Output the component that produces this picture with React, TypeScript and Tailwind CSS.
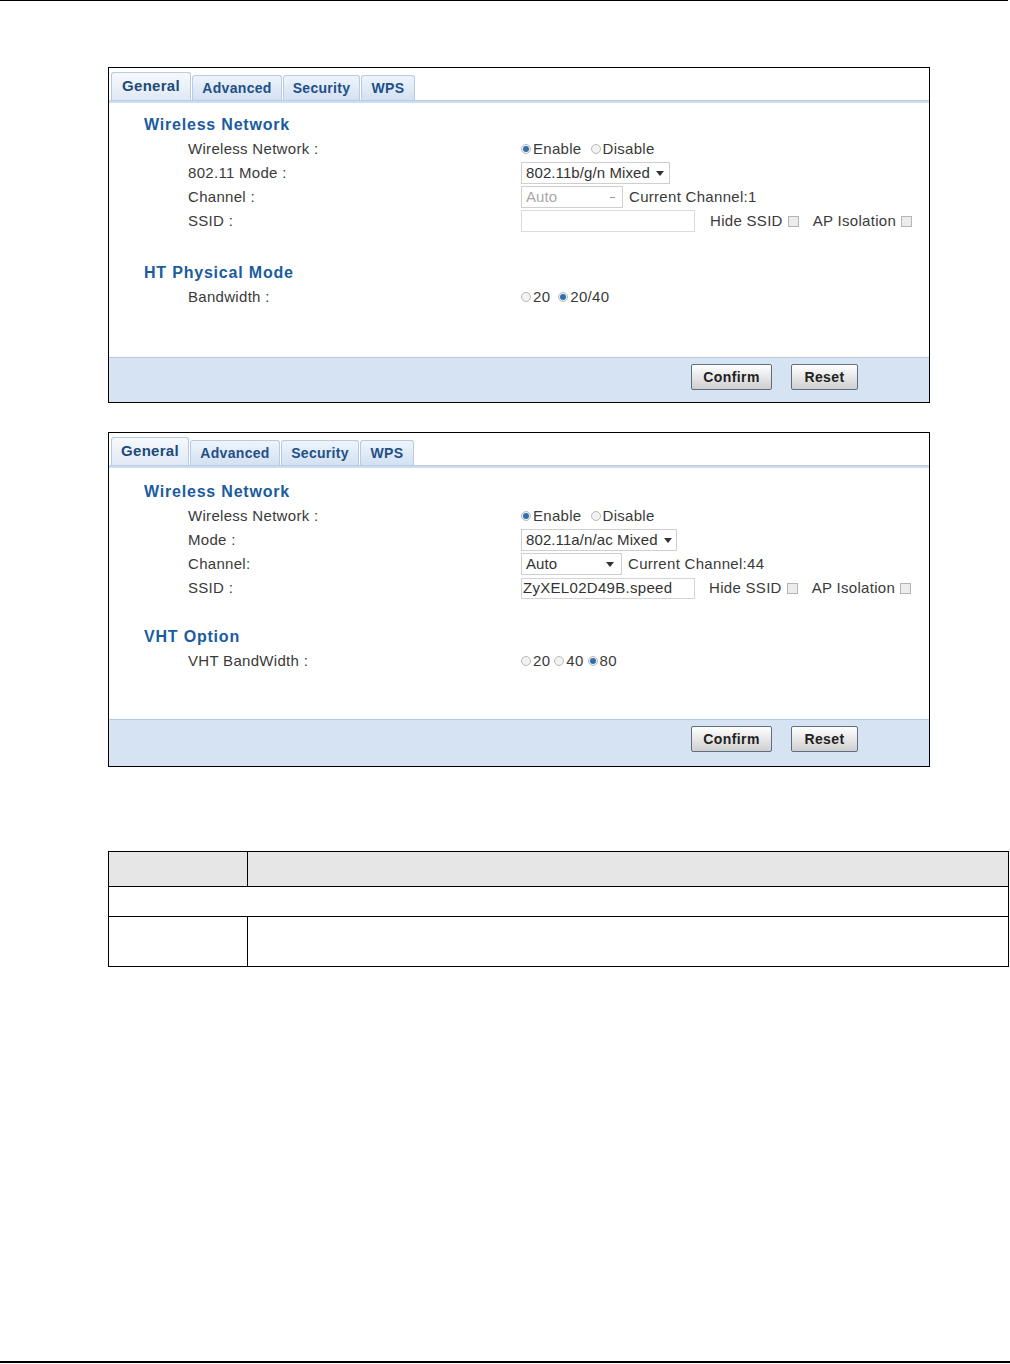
import React from "react";

const FONT = "font-['Liberation_Sans',Arial,sans-serif]";

function Radio({ on }: { on?: boolean }) {
    return (
        <span className="inline-flex w-[10px] h-[10px] rounded-full border border-[#b8b8b8] bg-[#f2f2f2] items-center justify-center mr-[2px] shrink-0">
            {on && <span className="w-[6px] h-[6px] rounded-full bg-[#2f6fb0]" />}
        </span>
    );
}

function Check() {
    return <span className="inline-block w-[11px] h-[11px] border border-[#b4b4b4] bg-[#ececec] shrink-0" />;
}

function Select({ value, width, disabled }: { value: string; width: string; disabled?: boolean }) {
    return (
        <div
            className={`${width} h-[22px] border border-[#cfcfcf] bg-white flex items-center justify-between pl-[4px] pr-[7px] whitespace-nowrap tracking-[0.1px] ${disabled ? "text-[#a8a8a8]" : "text-[#333]"}`}
        >
            <span>{value}</span>
            {disabled ? (
                <span className="w-[5px] h-[1px] bg-[#9a9a9a]" />
            ) : (
                <svg width="8" height="5" viewBox="0 0 8 5" className="shrink-0 ml-[6px]">
                    <path d="M0 0 L8 0 L4 5 Z" fill="#333" />
                </svg>
            )}
        </div>
    );
}

function Tabs({ widths }: { widths: string[] }) {
    const names = ["General", "Advanced", "Security", "WPS"];
    return (
        <div className="pt-[4px] pl-[2px]">
            <div className="flex items-end gap-[1px] h-[28px]">
                {names.map((n, i) =>
                    i === 0 ? (
                        <div
                            key={n}
                            className={`${widths[i]} h-[28px] rounded-t-[3px] border border-b-0 border-[#b7cbe2] bg-gradient-to-b from-[#f6f9fd] to-[#dfe9f5] flex items-center justify-center text-[15px] font-bold tracking-[0.3px] text-[#1d4a78]`}
                        >
                            {n}
                        </div>
                    ) : (
                        <div
                            key={n}
                            className={`${widths[i]} h-[25px] rounded-t-[3px] border border-b-0 border-[#b7cbe2] bg-gradient-to-b from-[#eef4fb] to-[#d3e1f2] flex items-center justify-center text-[14px] font-bold tracking-[0.3px] text-[#234f89]`}
                        >
                            {n}
                        </div>
                    )
                )}
            </div>
            <div className="h-[3px] -ml-[2px] bg-[#cddcee] border-t border-[#b9cde4]" />
        </div>
    );
}

function Heading({ children, cls }: { children: React.ReactNode; cls: string }) {
    return (
        <div className={`${cls} h-6 flex items-center pl-[35px] text-[16px] font-bold tracking-[0.8px] text-[#1b5c9f]`}>
            {children}
        </div>
    );
}

function Row({ label, children }: { label: string; children: React.ReactNode }) {
    return (
        <div className="h-6 flex items-center">
            <div className="w-[412px] pl-[79px] shrink-0 whitespace-nowrap">{label}</div>
            <div className="flex items-center whitespace-nowrap">{children}</div>
        </div>
    );
}

function Footer({ h }: { h: string }) {
    return (
        <div className={`${h} bg-[#d5e3f3] border-t border-[#b4c8e0] flex items-start justify-end pr-[71px] pt-[6px] gap-[19px]`}>
            <button className="w-[81px] h-[26px] rounded-[2px] border border-[#5f6f82] bg-gradient-to-b from-[#ffffff] to-[#cfcfcf] text-[14px] font-bold tracking-[0.4px] text-[#222]">
                Confirm
            </button>
            <button className="w-[67px] h-[26px] rounded-[2px] border border-[#5f6f82] bg-gradient-to-b from-[#ffffff] to-[#cfcfcf] text-[14px] font-bold tracking-[0.4px] text-[#222]">
                Reset
            </button>
        </div>
    );
}

function Panel1() {
    return (
        <div className="w-[822px] ml-[108px] mt-[66px] border border-black bg-white">
            <Tabs widths={["w-[80px]", "w-[90px]", "w-[77px]", "w-[54px]"]} />
            <Heading cls="mt-[10px]">Wireless Network</Heading>
            <Row label="Wireless Network :">
                <Radio on />
                <span className="mr-[9px]">Enable</span>
                <Radio />
                <span>Disable</span>
            </Row>
            <Row label="802.11 Mode :">
                <Select value="802.11b/g/n Mixed" width="w-[149px]" />
            </Row>
            <Row label="Channel :">
                <Select value="Auto" width="w-[102px]" disabled />
                <span className="ml-[6px]">Current Channel:1</span>
            </Row>
            <Row label="SSID :">
                <div className="w-[174px] h-[22px] border border-[#dcdcdc] bg-white" />
                <span className="ml-[15px] mr-[5px]">Hide SSID</span>
                <Check />
                <span className="ml-[14px] mr-[5px]">AP Isolation</span>
                <Check />
            </Row>
            <Heading cls="mt-[28px]">HT Physical Mode</Heading>
            <Row label="Bandwidth :">
                <Radio />
                <span className="mr-[8px]">20</span>
                <Radio on />
                <span>20/40</span>
            </Row>
            <div className="h-[48px]" />
            <Footer h="h-[45px]" />
        </div>
    );
}

function Panel2() {
    return (
        <div className="w-[822px] ml-[108px] mt-[29px] border border-black bg-white">
            <Tabs widths={["w-[78px]", "w-[90px]", "w-[78px]", "w-[54px]"]} />
            <Heading cls="mt-[12px]">Wireless Network</Heading>
            <Row label="Wireless Network :">
                <Radio on />
                <span className="mr-[9px]">Enable</span>
                <Radio />
                <span>Disable</span>
            </Row>
            <Row label="Mode :">
                <Select value="802.11a/n/ac Mixed" width="w-[156px]" />
            </Row>
            <Row label="Channel:">
                <Select value="Auto" width="w-[101px]" />
                <span className="ml-[6px]">Current Channel:44</span>
            </Row>
            <Row label="SSID :">
                <div className="w-[174px] h-[21px] border border-[#d4d4d4] bg-white flex items-center pl-[1px] text-[#333]">
                    ZyXEL02D49B.speed
                </div>
                <span className="ml-[14px] mr-[5px]">Hide SSID</span>
                <Check />
                <span className="ml-[14px] mr-[5px]">AP Isolation</span>
                <Check />
            </Row>
            <Heading cls="mt-[25px]">VHT Option</Heading>
            <Row label="VHT BandWidth :">
                <Radio />
                <span className="mr-[4px]">20</span>
                <Radio />
                <span className="mr-[4px]">40</span>
                <Radio on />
                <span>80</span>
            </Row>
            <div className="h-[46px]" />
            <Footer h="h-[47px]" />
        </div>
    );
}

export default function App() {
    return (
        <div className={`${FONT} w-[1010px] h-[1364px] bg-white text-[15px] tracking-[0.3px] text-[#3a3a3a] flex flex-col`}>
            <div className="w-[1008px] h-[1px] bg-black shrink-0" />
            <Panel1 />
            <Panel2 />

            {/* ── Description table ── */}
            <table className="ml-[108px] mt-[84px] w-[901px] border-collapse">
                <tbody>
                    <tr className="h-[35px] bg-[#e6e6e6]">
                        <td className="w-[139px] border border-black" />
                        <td className="border border-black" />
                    </tr>
                    <tr className="h-[30px]">
                        <td colSpan={2} className="border border-black" />
                    </tr>
                    <tr className="h-[50px]">
                        <td className="border border-black" />
                        <td className="border border-black" />
                    </tr>
                </tbody>
            </table>

            <div className="flex-1" />
            <div className="w-[1010px] h-[2px] bg-black shrink-0 mb-[1px]" />
        </div>
    );
}
